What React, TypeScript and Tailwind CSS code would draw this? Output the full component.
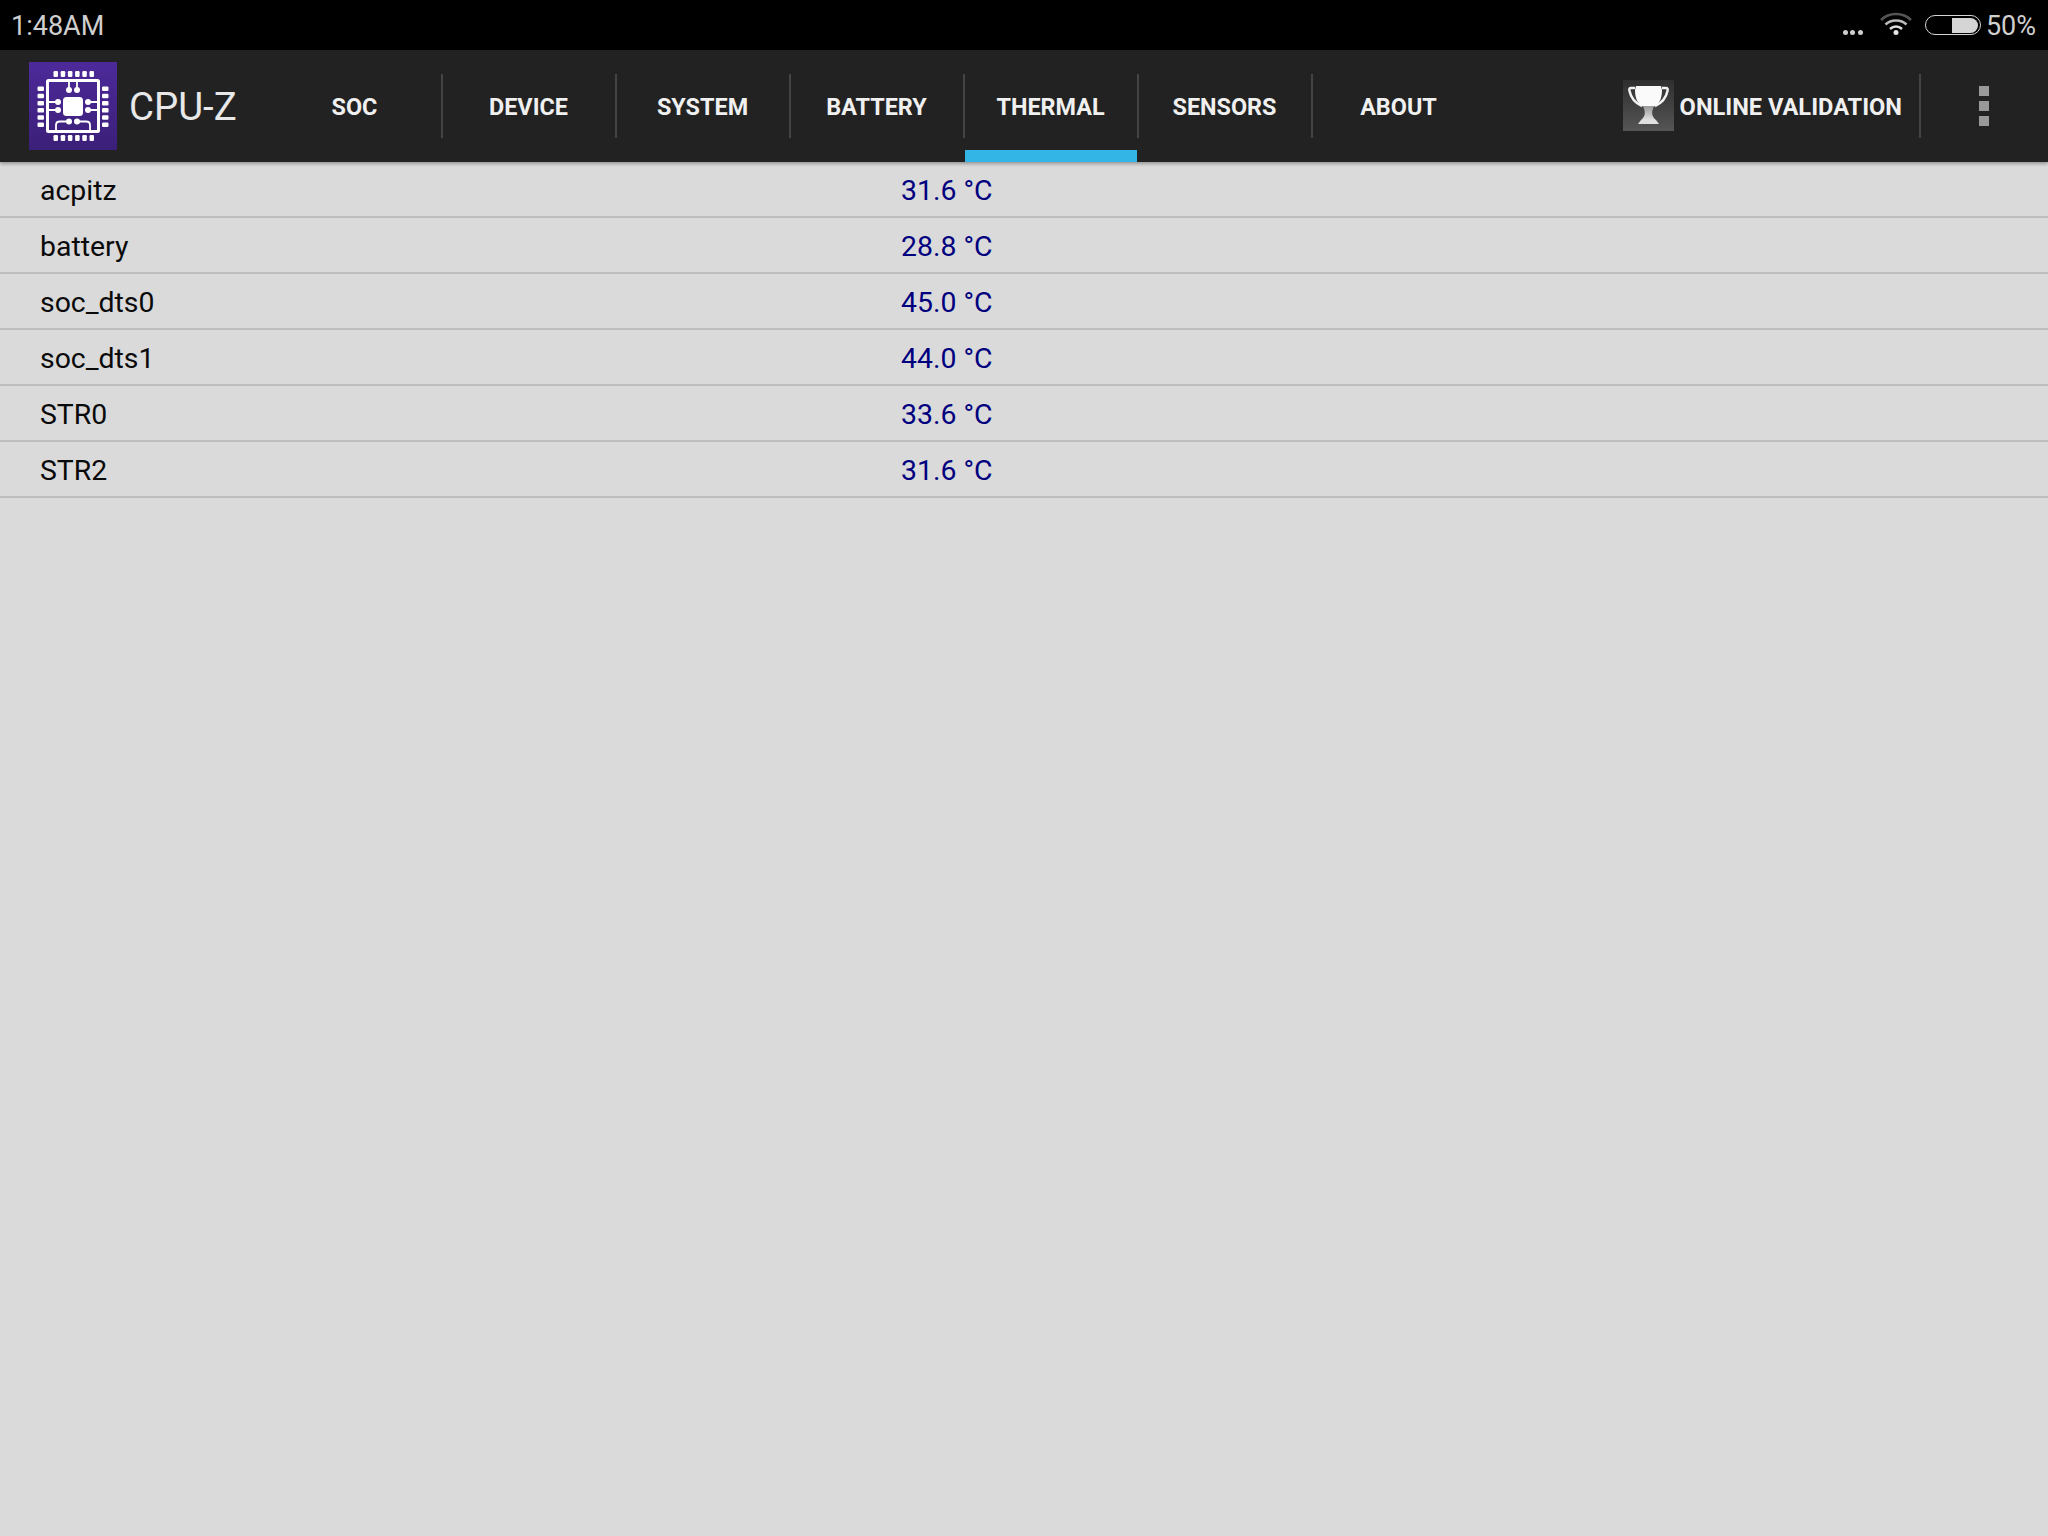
import React from 'react';

const tabs = ['SOC', 'DEVICE', 'SYSTEM', 'BATTERY', 'THERMAL', 'SENSORS', 'ABOUT'];

const rows = [
  ['acpitz', '31.6 °C'],
  ['battery', '28.8 °C'],
  ['soc_dts0', '45.0 °C'],
  ['soc_dts1', '44.0 °C'],
  ['STR0', '33.6 °C'],
  ['STR2', '31.6 °C'],
];

function CpuLogo() {
  return (
    <div className="w-[88px] h-[88px] bg-gradient-to-b from-[#4d2a9a] to-[#3b1f78] shrink-0">
      <svg viewBox="0 0 88 88" width="88" height="88" fill="#fff" stroke="none">
        {[0, 1, 2, 3, 4, 5].map((i) => (
          <g key={i}>
            <rect x={24.500 + i * 7.200} y={9} width={4.500} height={6} rx={1.200} />
            <rect x={24.500 + i * 7.200} y={73} width={4.500} height={6} rx={1.200} />
            <rect x={8.500} y={24.500 + i * 7.200} width={6.500} height={4.500} rx={1.200} />
            <rect x={73} y={24.500 + i * 7.200} width={6.500} height={4.500} rx={1.200} />
          </g>
        ))}
        <rect x={18.500} y={18.500} width={51} height={51} rx={1} fill="none" stroke="#fff" strokeWidth={3} />
        <rect x={34} y={35} width={20} height={19} rx={3.500} />
        <g fill="none" stroke="#fff" strokeWidth={1.800}>
          <path d="M40 19V28M48 19V28" />
          <path d="M19 40H29M19 48H29M59 40H69M59 48H69" />
          <path d="M27 69V63Q27 59.500 31 59.500H40M48 59.500H57Q61 59.500 61 63V69" />
        </g>
        <circle cx={40} cy={28} r={3} />
        <circle cx={48} cy={28} r={3} />
        <circle cx={29} cy={40} r={3} />
        <circle cx={29} cy={48} r={3} />
        <circle cx={59} cy={40} r={3} />
        <circle cx={59} cy={48} r={3} />
        <circle cx={40} cy={59.500} r={3} />
        <circle cx={48} cy={59.500} r={3} />
      </svg>
    </div>
  );
}

function TrophyIcon() {
  return (
    <div className="w-[51px] h-[51px] bg-gradient-to-b from-[#2f2f2f] to-[#555555] shrink-0 -mt-[1px]">
      <svg viewBox="0 0 51 51" width="51" height="51">
        <defs>
          <linearGradient id="stem" x1="0" y1="0" x2="0" y2="1">
            <stop offset="0" stopColor="#9a9a9a" />
            <stop offset="1" stopColor="#e0e0e0" />
          </linearGradient>
        </defs>
        <path d="M12 8H8C6.500 8 6 9 6.500 11C8 18 12 23 19 26" fill="none" stroke="#f2f2f2" strokeWidth="2.500" />
        <path d="M39 8H43C44.500 8 45 9 44.500 11C43 18 39 23 32 26" fill="none" stroke="#f2f2f2" strokeWidth="2.500" />
        <path d="M13 6H38L39 10C39 19 36 24 31 26.500H20C15 24 12 19 12 10Z" fill="#fafafa" />
        <path d="M20 26.500H31C28.500 31 28 36 33 40H18C23 36 22.500 31 20 26.500Z" fill="url(#stem)" />
        <path d="M18 40H33L36 44H15Z" fill="#e0e0e0" />
      </svg>
    </div>
  );
}

function StatusIcons() {
  return (
    <div className="flex items-center">
      <div className="flex gap-[2.500px] mt-[14px] mr-[17px]">
        <span className="w-[5px] h-[5px] rounded-full bg-[#cfcfcf]" />
        <span className="w-[5px] h-[5px] rounded-full bg-[#cfcfcf]" />
        <span className="w-[5px] h-[5px] rounded-full bg-[#cfcfcf]" />
      </div>
      <svg viewBox="0 0 32 24" width="32" height="24" fill="none" className="mr-[13px] -mt-[2px]">
        <path d="M1 8C9 0 23 0 31 8" stroke="#555" strokeWidth="2.500" />
        <path d="M5.500 12.500C11 7 21 7 26.500 12.500" stroke="#bbb" strokeWidth="2.500" />
        <path d="M10 17C13.500 13.500 18.500 13.500 22 17" stroke="#ddd" strokeWidth="2.500" />
        <circle cx="16" cy="20.500" r="2.500" fill="#e5e5e5" />
      </svg>
      <div className="relative w-[56px] h-[20px] rounded-full border-[1.500px] border-[#d5d5d5] mr-[5px]">
        <div className="absolute right-[1.500px] top-[1.500px] bottom-[1.500px] w-[26px] bg-[#d5d5d5] rounded-r-full" />
      </div>
    </div>
  );
}

export default function App() {
  return (
    <div
      className="w-[2048px] h-[1536px] flex flex-col bg-[#dadada] overflow-hidden"
      style={{ fontFamily: 'Roboto, sans-serif' }}
    >
      <div className="h-[50px] bg-black flex items-center justify-between pl-[11px] pr-[12px] shrink-0">
        <span className="text-[27px] text-[#cfcfcf] pt-[2px]">1:48AM</span>
        <div className="flex items-center">
          <StatusIcons />
          <span className="text-[27px] text-[#cfcfcf] pt-[2px]">50%</span>
        </div>
      </div>

      <div className="h-[112px] bg-[#222222] flex items-center pl-[29px] shrink-0 shadow-[0_2px_3px_rgba(0,0,0,0.3)] z-10">
        <CpuLogo />
        <span className="text-[38.400px] text-[#e8e8e8] ml-[12px] w-[140px] pt-[2px]">CPU-Z</span>
        <div className="flex h-full">
          {tabs.map((tab, i) => (
            <div key={tab} className="relative w-[174px] h-full flex items-center justify-center pr-[3px]">
              <span className="text-[23.400px] font-bold text-[#f0f0f0] pt-[4px]">{tab}</span>
              {i < 6 && <div className="absolute right-0 top-[24px] w-[2px] h-[64px] bg-[#444444]" />}
              {tab === 'THERMAL' && (
                <div className="absolute left-0 right-[2px] bottom-0 h-[12px] bg-[#33b5e5]" />
              )}
            </div>
          ))}
        </div>
        <div className="ml-auto flex items-center h-full">
          <TrophyIcon />
          <span className="text-[23.600px] font-bold text-[#f0f0f0] ml-[6px] pt-[4px]">ONLINE VALIDATION</span>
          <div className="w-[2px] h-[64px] bg-[#444444] ml-[17px]" />
          <div className="w-[127px] flex flex-col items-center gap-[5px] pr-[1px]">
            <span className="w-[10px] h-[10px] bg-[#999999]" />
            <span className="w-[10px] h-[10px] bg-[#999999]" />
            <span className="w-[10px] h-[10px] bg-[#999999]" />
          </div>
        </div>
      </div>

      <div className="flex flex-col">
        {rows.map(([name, value]) => (
          <div key={name} className="h-[56px] flex items-center border-b-2 border-[#bdbdbd] pl-[40px] pt-[5px]">
            <span className="w-[861px] text-[28.400px] text-[#0a0a0a]">{name}</span>
            <span className="text-[28.400px] text-[#00007f]">{value}</span>
          </div>
        ))}
      </div>
    </div>
  );
}
